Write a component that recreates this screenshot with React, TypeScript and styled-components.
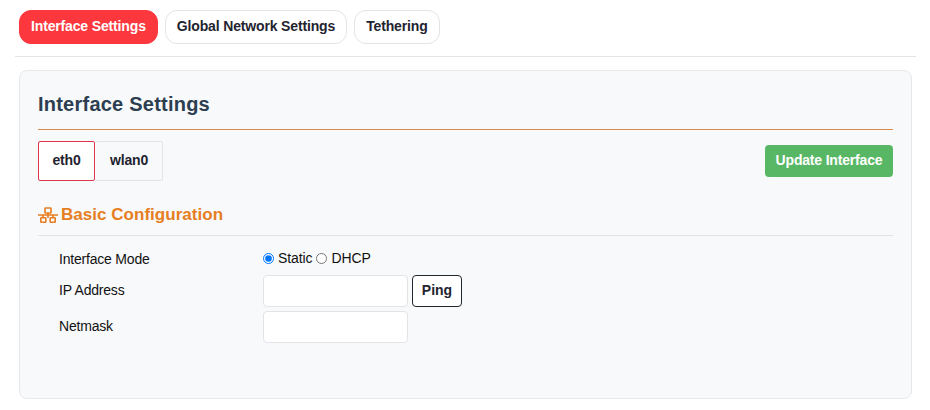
import React from "react";
import styled, { createGlobalStyle } from "styled-components";

const GlobalStyle = createGlobalStyle`
  html, body {
    margin: 0;
    padding: 0;
    background: #fff;
    font-family: "Liberation Sans", Arial, sans-serif;
    color: #000;
  }
  * { box-sizing: border-box; }
`;

const Page = styled.div`
  width: 930px;
  height: 410px;
  padding: 10px 14px 0 15px;
  overflow: hidden;
`;

const MainTabs = styled.nav`
  display: flex;
  gap: 7px;
  padding: 0 0 12px 4px;
  border-bottom: 1px solid #e2e4e8;
`;

const MainTab = styled.button<{ $active?: boolean }>`
  height: 34px;
  padding: 0 11px 2px;
  border-radius: 12px;
  border: 1px solid ${(props) => (props.$active ? "#fc383e" : "#e2e4e8")};
  background: ${(props) => (props.$active ? "#fc383e" : "#fff")};
  color: ${(props) => (props.$active ? "#fff" : "#1f2430")};
  font-family: inherit;
  font-size: 14px;
  font-weight: 700;
  letter-spacing: -0.15px;
`;

const Card = styled.section`
  width: 893px;
  height: 329px;
  margin: 13px 0 0 4px;
  padding: 18px;
  background: #f8f9fb;
  border: 1px solid #e6e8ec;
  border-radius: 8px;
`;

const Title = styled.h2`
  margin: 0;
  height: 41px;
  padding-top: 3px;
  font-size: 20px;
  line-height: 24px;
  font-weight: 700;
  letter-spacing: 0.23px;
  color: #2c3e50;
  border-bottom: 1px solid #d98a4a;
`;

const TabRow = styled.div`
  display: flex;
  justify-content: space-between;
  align-items: center;
  margin-top: 11px;
`;

const IfaceTabs = styled.div`
  display: flex;
`;

const IfaceTab = styled.button<{ $active?: boolean; $width: number }>`
  width: ${(props) => props.$width}px;
  height: 40px;
  padding: ${(props) => (props.$active ? "0 0 2px" : "0 0 2px 1px")};
  border: 1px solid ${(props) => (props.$active ? "#e0364c" : "#e2e4e8")};
  border-left-width: ${(props) => (props.$active ? "1px" : "0")};
  border-radius: 2px;
  background: ${(props) => (props.$active ? "#fff" : "#f8f9fb")};
  color: #1f2430;
  font-family: inherit;
  font-size: 14px;
  font-weight: 700;
  letter-spacing: -0.18px;
`;

const UpdateButton = styled.button`
  width: 128px;
  height: 32px;
  padding: 0 0 2px;
  border: none;
  border-radius: 4px;
  background: #58b765;
  color: #fff;
  font-family: inherit;
  font-size: 14px;
  font-weight: 700;
  letter-spacing: -0.18px;
`;

const SectionHead = styled.h3`
  display: flex;
  align-items: center;
  gap: 3px;
  margin: 20px 0 0;
  height: 35px;
  padding-bottom: 6px;
  font-size: 17px;
  font-weight: 700;
  letter-spacing: 0.03px;
  color: #e67e22;
  border-bottom: 1px solid #e2e4e8;
`;

const Form = styled.div`
  display: grid;
  grid-template-columns: 204px auto;
  justify-content: start;
  row-gap: 4px;
  margin-top: 12px;
  padding-left: 21px;
  font-size: 14px;
  color: #111;
`;

const Label = styled.label`
  display: flex;
  align-items: center;
  padding-bottom: 2px;
  letter-spacing: -0.2px;
`;

const ModeRow = styled.div`
  display: flex;
  align-items: center;
  height: 20px;
  margin-bottom: 3px;
  letter-spacing: -0.1px;
`;

const Radio = styled.input`
  width: 11px;
  height: 11px;
  margin: 0 4px 0 0;
`;

const ModeText = styled.span`
  margin-right: 4px;
`;

const Field = styled.div`
  display: flex;
  gap: 4px;
`;

const TextInput = styled.input`
  width: 145px;
  height: 32px;
  border: 1px solid #e2e4e8;
  border-radius: 4px;
  background: #fff;
`;

const PingButton = styled.button`
  width: 50px;
  height: 32px;
  padding: 0 0 2px;
  border: 1px solid #22262e;
  border-radius: 4px;
  background: #fff;
  color: #1f2430;
  font-family: inherit;
  font-size: 14px;
  font-weight: 700;
`;

function NetworkIcon() {
  return (
    <svg width="20" height="16" viewBox="0 0 20 16" fill="none" stroke="#e67e22" strokeWidth="1.6">
      <rect x="7" y="1" width="6" height="5" rx="0.5" />
      <path d="M10 6v5M0 8h20M5 8v3M15 8v3" />
      <rect x="2.8" y="10.8" width="5" height="4.4" rx="0.5" />
      <rect x="12.2" y="10.8" width="5" height="4.4" rx="0.5" />
    </svg>
  );
}

export default function App() {
  return (
    <Page>
      <GlobalStyle />
      <MainTabs>
        <MainTab $active>Interface Settings</MainTab>
        <MainTab>Global Network Settings</MainTab>
        <MainTab>Tethering</MainTab>
      </MainTabs>
      <Card>
        <Title>Interface Settings</Title>
        <TabRow>
          <IfaceTabs>
            <IfaceTab $active $width={57}>eth0</IfaceTab>
            <IfaceTab $width={68}>wlan0</IfaceTab>
          </IfaceTabs>
          <UpdateButton>Update Interface</UpdateButton>
        </TabRow>
        <SectionHead>
          <NetworkIcon />
          Basic Configuration
        </SectionHead>
        <Form>
          <Label>Interface Mode</Label>
          <ModeRow>
            <Radio type="radio" name="mode" defaultChecked />
            <ModeText>Static</ModeText>
            <Radio type="radio" name="mode" />
            <span>DHCP</span>
          </ModeRow>
          <Label>IP Address</Label>
          <Field>
            <TextInput type="text" />
            <PingButton>Ping</PingButton>
          </Field>
          <Label>Netmask</Label>
          <Field>
            <TextInput type="text" />
          </Field>
        </Form>
      </Card>
    </Page>
  );
}
